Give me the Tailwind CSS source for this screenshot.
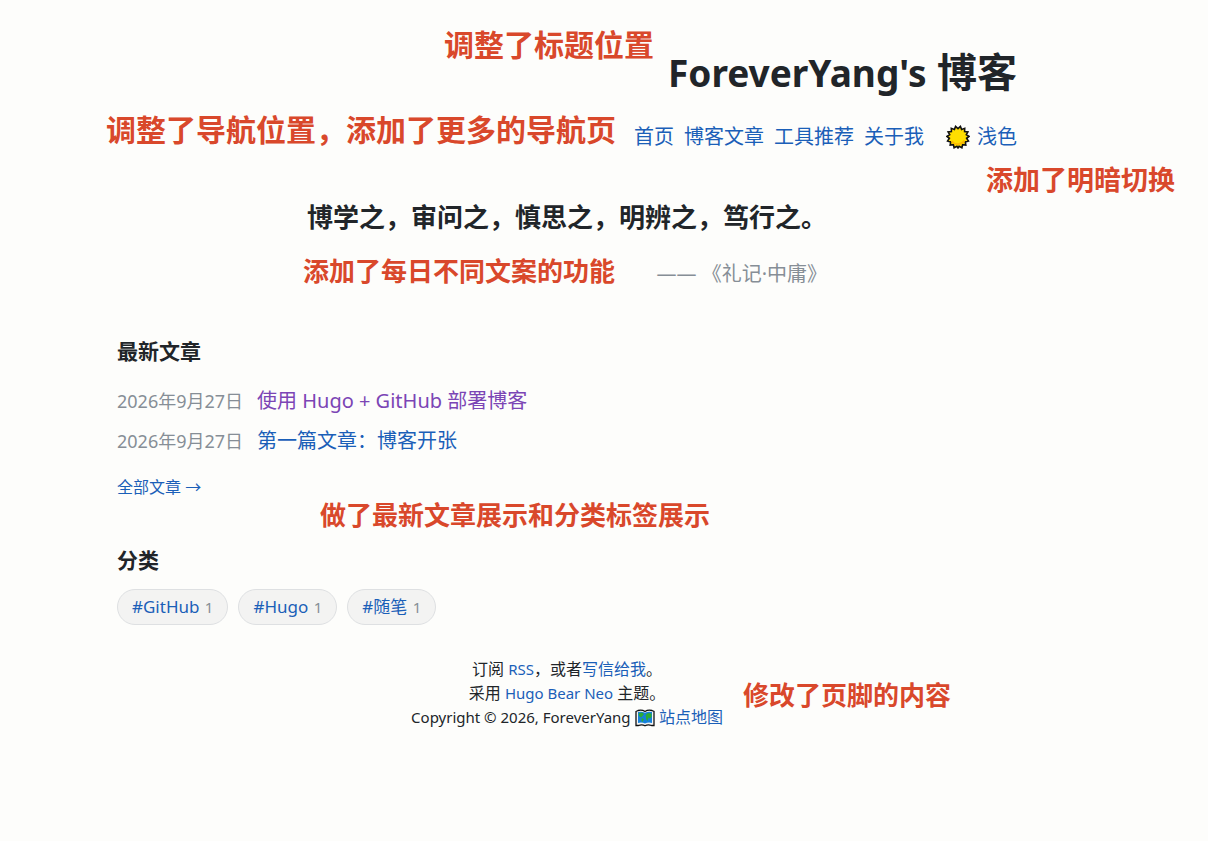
<!DOCTYPE html>
<html lang="zh-CN">
  <head>
    <meta charset="UTF-8" />
    <meta name="viewport" content="width=device-width, initial-scale=1.0" />
    <title>ForeverYang's 博客</title>
    <script src="https://cdn.jsdelivr.net/npm/@tailwindcss/browser@4"></script>
  </head>
  <body
    class="relative min-h-screen bg-[#fdfdfb] pr-[74px] font-['Noto_Sans','Noto_Sans_CJK_SC',sans-serif] text-[#212529]"
  >
    <div class="mx-auto max-w-[900px]">
      <!-- Site title and navigation -->
      <header class="flex flex-col items-end pt-[46px]">
        <h1 class="text-[40px] leading-[52px] font-bold"><span class="text-[37px]">ForeverYang's</span> 博客</h1>
        <nav class="mt-[22px] flex items-center gap-[10px] text-xl leading-8 text-[#1b5fb8]">
          <a href="#">首页</a>
          <a href="#">博客文章</a>
          <a href="#">工具推荐</a>
          <a href="#">关于我</a>
          <button type="button" class="ml-3 flex items-center gap-[7px]">
            <svg class="size-6" viewBox="0 0 24 24" aria-hidden="true">
              <path
                d="M12 3.600L14.400 1.400L15.600 4.400L18.700 3.300L18.600 6.500L21.900 6.900L20.300 9.700L23.100 11.400L20.600 13.300L22.400 16.100L19.300 16.900L19.800 20.100L16.600 19.600L15.900 22.700L13.100 21.200L12 22.900L10.900 21.200L8.100 22.700L7.400 19.600L4.200 20.100L4.700 16.900L1.600 16.100L3.400 13.300L.9 11.400L3.700 9.700L2.100 6.900L5.400 6.500L5.300 3.300L8.400 4.400L9.600 1.400Z"
                fill="#ffde00"
                stroke="#111"
                stroke-width="1.6"
              />
              <path d="M5.500 16a8 8 0 0 0 13-.5" fill="none" stroke="#fdb900" stroke-width="1.800" />
            </svg>
            浅色
          </button>
        </nav>
      </header>

      <main>
        <!-- Daily quote -->
        <figure class="mx-auto mt-[43px] w-fit">
          <blockquote class="text-[26px] leading-[42px] font-bold">
            博学之，审问之，慎思之，明辨之，笃行之。
          </blockquote>
          <figcaption class="mt-5 text-right text-xl leading-8 text-[#868e96]">
            —— 《礼记·中庸》
          </figcaption>
        </figure>

        <!-- Latest posts -->
        <section class="mt-[45px]">
          <h2 class="text-[21px] leading-8 font-bold">最新文章</h2>
          <ul class="mt-[18px] space-y-2 text-xl leading-8">
            <li class="flex h-8 items-baseline">
              <time datetime="2026-09-27" class="w-[140px] text-lg leading-8 text-[#868e96]">2026年9月27日</time>
              <a href="#" class="text-[#7b45b5]">使用 Hugo + GitHub 部署博客</a>
            </li>
            <li class="flex h-8 items-baseline">
              <time datetime="2026-09-27" class="w-[140px] text-lg leading-8 text-[#868e96]">2026年9月27日</time>
              <a href="#" class="text-[#1b5fb8]">第一篇文章：博客开张</a>
            </li>
          </ul>
          <a href="#" class="mt-[18px] inline-block text-base text-[#1b5fb8]">全部文章 →</a>
        </section>

        <!-- Categories -->
        <section class="mt-[45px]">
          <h2 class="text-[21px] leading-8 font-bold">分类</h2>
          <div class="mt-[13px] flex gap-[10px] text-[17px] leading-[33px] text-[#1b5fb8]">
            <a href="#" class="rounded-full border border-[#dee0e2] bg-[#f3f3f2] px-[14px]"
              >#GitHub <span class="ml-px text-[15px] text-[#868e96]">1</span></a
            >
            <a href="#" class="rounded-full border border-[#dee0e2] bg-[#f3f3f2] px-[14px]"
              >#Hugo <span class="ml-px text-[15px] text-[#868e96]">1</span></a
            >
            <a href="#" class="rounded-full border border-[#dee0e2] bg-[#f3f3f2] px-[14px]"
              >#随笔 <span class="ml-px text-[15px] text-[#868e96]">1</span></a
            >
          </div>
        </section>
      </main>

      <footer class="mt-8 text-center text-base leading-6">
        <p>订阅 <a href="#" class="text-[15px] text-[#1b5fb8]">RSS</a>，或者<a href="#" class="text-[#1b5fb8]">写信给我</a>。</p>
        <p>采用 <a href="#" class="text-[15px] text-[#1b5fb8]">Hugo Bear Neo</a> 主题。</p>
        <p>
          <span class="text-[15px]">Copyright © 2026, ForeverYang</span>
          <a href="#" class="text-[#1b5fb8]"
            ><svg class="inline-block h-[18px] w-5 align-[-4px]" viewBox="0 0 20 18" aria-hidden="true">
              <path d="M1 2.500L3 1.500Q7 .5 10 2.500Q13 .5 17 1.500L19 2.500V16.500H16.500Q13 15 10 16.800Q7 15 3.500 16.500H1Z" fill="#f4f4f4" stroke="#111" stroke-width="1.300" />
              <path d="M3 3Q7 2 10 3.800Q13 2 17 3V14Q13 13 10 14.600Q7 13 3 14Z" fill="#1580db" />
              <path d="M3.500 4.500L7 3.500L9 5L7.500 7L6 8.500L4 7ZM6.500 9L9 10L7.500 13L6.500 12ZM10.500 6L13 4L16.500 4.500V8L15 9.500L13.500 8.500L12.500 12L11 10V8Z" fill="#2cab35" />
            </svg>
            站点地图</a>
        </p>
      </footer>
    </div>

    <!-- Change notes pinned over the page -->
    <aside class="font-bold whitespace-nowrap text-[#d9482b]">
      <p class="absolute top-[25px] left-[444px] text-[30px] leading-10">调整了标题位置</p>
      <p class="absolute top-[110px] left-[106px] text-[30px] leading-10">调整了导航位置，添加了更多的导航页</p>
      <p class="absolute top-[160px] left-[986px] text-[27px] leading-10">添加了明暗切换</p>
      <p class="absolute top-[251px] left-[303px] text-[26px] leading-10">添加了每日不同文案的功能</p>
      <p class="absolute top-[495px] left-[320px] text-[26px] leading-10">做了最新文章展示和分类标签展示</p>
      <p class="absolute top-[675px] left-[743px] text-[26px] leading-10">修改了页脚的内容</p>
    </aside>
  </body>
</html>
